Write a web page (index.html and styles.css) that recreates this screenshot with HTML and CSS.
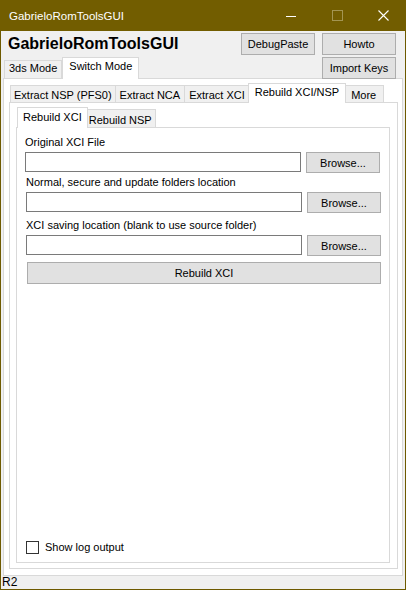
FILE: index.html
```html
<!DOCTYPE html>
<html>

<head>
    <title>GabrieloRomToolsGUI</title>
    <link rel="stylesheet" href="styles.css">
</head>

<body>
    <div class="window">
        <div class="titlebar">
            <span class="title">GabrieloRomToolsGUI</span>
            <div class="caption-btns">
                <span class="cap-btn">
                    <svg width="10" height="10" viewBox="0 0 10 10"><line x1="0" y1="5.5" x2="10" y2="5.5" stroke="#fff" stroke-width="1"/></svg>
                </span>
                <span class="cap-btn">
                    <svg width="11" height="11" viewBox="0 0 11 11"><rect x="0.5" y="0.5" width="10" height="10" fill="none" stroke="#a39552" stroke-width="1"/></svg>
                </span>
                <span class="cap-btn">
                    <svg width="11" height="11" viewBox="0 0 11 11"><path d="M0.5 0.5 L10.5 10.5 M10.5 0.5 L0.5 10.5" stroke="#fff" stroke-width="1.1"/></svg>
                </span>
            </div>
        </div>

        <div class="client">
            <div class="header">
                <h1 class="app-name">GabrieloRomToolsGUI</h1>
                <button class="btn btn-top">DebugPaste</button>
                <button class="btn btn-top">Howto</button>
            </div>

            <div class="tabrow">
                <div class="tabs mode-tabs">
                    <div class="tab">3ds Mode</div>
                    <div class="tab active">Switch Mode</div>
                </div>
                <button class="btn btn-keys">Import Keys</button>
            </div>

            <div class="panel mode-panel">
                <div class="tabs tool-tabs">
                    <div class="tab">Extract NSP (PFS0)</div>
                    <div class="tab">Extract NCA</div>
                    <div class="tab">Extract XCI</div>
                    <div class="tab active">Rebuild XCI/NSP</div>
                    <div class="tab">More</div>
                </div>

                <div class="panel tool-panel">
                    <div class="tabs sub-tabs">
                        <div class="tab active">Rebuild XCI</div>
                        <div class="tab">Rebuild NSP</div>
                    </div>

                    <div class="panel sub-panel">
                        <label class="field-label first" for="xci">Original XCI File</label>
                        <div class="field-row">
                            <input type="text" id="xci">
                            <button class="btn btn-browse">Browse...</button>
                        </div>

                        <label class="field-label shifted" for="folders">Normal, secure and update folders location</label>
                        <div class="field-row shifted">
                            <input type="text" id="folders">
                            <button class="btn btn-browse">Browse...</button>
                        </div>

                        <label class="field-label shifted gap" for="save">XCI saving location (blank to use source folder)</label>
                        <div class="field-row shifted">
                            <input type="text" id="save">
                            <button class="btn btn-browse">Browse...</button>
                        </div>

                        <button class="btn btn-rebuild">Rebuild XCI</button>

                        <label class="check-row">
                            <span class="checkbox"></span>
                            Show log output
                        </label>
                    </div>
                </div>
            </div>

            <div class="status">R2</div>
        </div>
    </div>
</body>

</html>
```

FILE: styles.css
```css
body {
    margin: 0;
    padding: 0;
    font-family: "Liberation Sans", Arial, sans-serif;
    font-size: 11px;
    color: #000;
    background: #fff;
}

.window {
    width: 406px;
    height: 590px;
    box-sizing: border-box;
    border: 1px solid #6e5a00;
    border-top: none;
    display: flex;
    flex-direction: column;
    background-color: #f0f0f0;
}

.titlebar {
    height: 31px;
    flex-shrink: 0;
    margin: 0 -1px;
    background-color: #725d00;
    display: flex;
    align-items: center;
    color: #fff;
}

.title {
    padding-left: 9px;
    font-size: 11.5px;
}

.caption-btns {
    margin-left: auto;
    display: flex;
}

.cap-btn {
    width: 46px;
    height: 31px;
    display: flex;
    align-items: center;
    justify-content: center;
}

.client {
    flex: 1;
    display: flex;
    flex-direction: column;
}

/* header with app name and buttons */
.header {
    height: 25px;
    display: flex;
    align-items: flex-start;
    padding-right: 9px;
}

.app-name {
    margin: 2px 0 0 7px;
    font-size: 16px;
    line-height: 22px;
    font-weight: bold;
    margin-right: auto;
}

.btn {
    font-family: "Liberation Sans", Arial, sans-serif;
    font-size: 11px;
    color: #000;
    background-color: #e1e1e1;
    border: 1px solid #adadad;
    padding: 0;
    margin: 0;
}

.btn-top {
    width: 74px;
    height: 22px;
    margin-top: 2px;
}

.btn-top + .btn-top {
    margin-left: 7px;
}

.tabrow {
    height: 22px;
    display: flex;
    align-items: flex-end;
    padding-right: 9px;
}

.btn-keys {
    margin-left: auto;
    width: 74px;
    height: 22px;
    position: relative;
    top: 1px;
    z-index: 2;
}

/* tabs */
.tabs {
    display: flex;
    align-items: flex-end;
    flex-shrink: 0;
}

.tab {
    box-sizing: border-box;
    border: 1px solid #d9d9d9;
    border-bottom: none;
    background-color: #f0f0f0;
    padding: 0 4px;
    line-height: 13px;
    white-space: nowrap;
    text-align: center;
}

.tab + .tab {
    margin-left: -1px;
}

.tab.active {
    background-color: #fff;
    position: relative;
    z-index: 1;
    margin: 0 -2px -1px;
    padding: 0 6px;
}

.tab.active:first-child {
    margin-left: 0;
}

.panel {
    background-color: #fff;
    border: 1px solid #d9d9d9;
    display: flex;
    flex-direction: column;
    flex: 1;
}

.mode-tabs {
    height: 22px;
    padding-left: 3px;
}

.mode-tabs .tab {
    height: 18px;
    padding-top: 1px;
}

.mode-tabs .tab.active {
    height: 22px;
    padding-top: 2px;
    margin-left: 0;
}

.mode-panel {
    margin: 0 2px;
    padding: 4px 4px 6px 5px;
}

.tool-tabs {
    height: 19px;
    padding-left: 1px;
}

.tool-tabs .tab {
    height: 17px;
    padding-top: 3px;
}

.tool-tabs .tab:first-child {
    padding: 3px 3px 0;
}

.tool-tabs .tab.active {
    height: 20px;
    padding-top: 2px;
}

.tool-tabs .tab:last-child {
    padding: 3px 7px 0;
}

.tool-panel {
    padding: 4px 7px 5px 6px;
}

.sub-tabs {
    height: 20px;
    padding-left: 1px;
}

.sub-tabs .tab {
    height: 18px;
    padding: 4px 3px 0;
}

.sub-tabs .tab.active {
    height: 21px;
    padding: 3px 5px 0;
    margin-left: 0;
}

.sub-panel {
    padding: 8px 9px 8px 8px;
}

/* fields */
.field-label {
    display: block;
    line-height: 13px;
}

.field-label.shifted {
    margin-left: 1px;
    margin-top: 4px;
}

.field-label.gap {
    margin-top: 7px;
}

.field-row {
    display: flex;
    align-items: flex-start;
    height: 20px;
    margin-top: 3px;
}

.field-row.shifted {
    margin-left: 1px;
    margin-right: -1px;
}

.field-row input {
    width: 276px;
    height: 20px;
    box-sizing: border-box;
    border: 1px solid #7a7a7a;
    margin: 0;
    padding: 0 2px;
    font-size: 11px;
}

.btn-browse {
    width: 74px;
    height: 21px;
    margin-left: auto;
}

.btn-rebuild {
    height: 22px;
    margin: 7px 0 0 2px;
    width: 354px;
}

.check-row {
    margin-top: auto;
    display: flex;
    align-items: center;
    margin-left: 1px;
    line-height: 13px;
}

.checkbox {
    width: 13px;
    height: 13px;
    box-sizing: border-box;
    border: 1px solid #333;
    background: #fff;
    margin-right: 6px;
}

.status {
    height: 13px;
    line-height: 13px;
    font-size: 12px;
    padding-left: 1px;
    overflow: hidden;
}
```
